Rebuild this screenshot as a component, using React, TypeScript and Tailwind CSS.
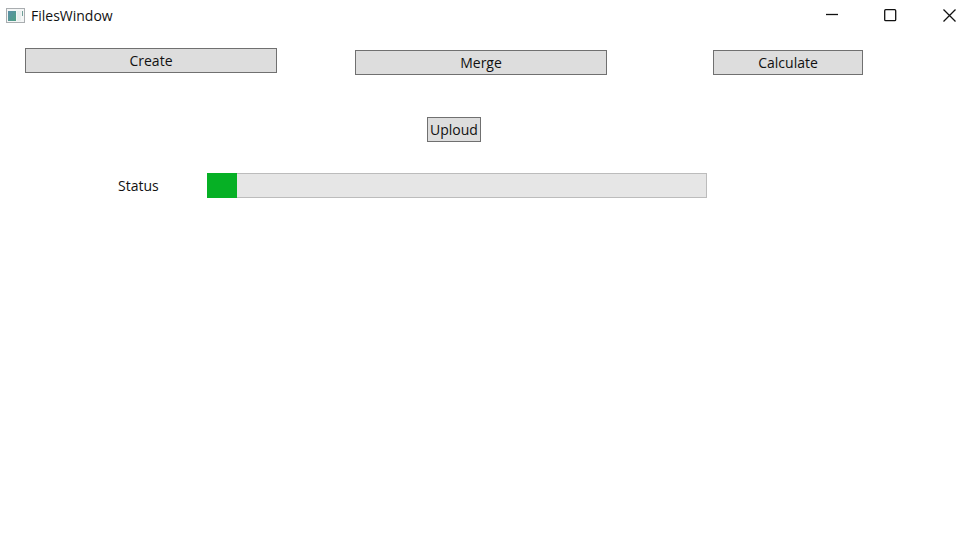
import type { ReactNode } from "react";

const PROGRESS = 6;

function PushButton({ className, children }: { className: string; children: ReactNode }) {
  return (
    <button
      type="button"
      className={`flex h-[25px] items-center justify-center border border-[#707070] bg-[#dddddd] leading-5 hover:bg-[#bee6fd] ${className}`}
    >
      {children}
    </button>
  );
}

function CaptionButton({ label, children }: { label: string; children: ReactNode }) {
  return (
    <button
      type="button"
      aria-label={label}
      className="flex h-[31px] w-[59px] items-center justify-center hover:bg-gray-200"
    >
      <svg width="13" height="13" viewBox="0 0 13 13" fill="none" stroke="#111" strokeWidth="1.3" aria-hidden="true">
        {children}
      </svg>
    </button>
  );
}

function AppIcon() {
  return (
    <svg width="19" height="15" viewBox="0 0 19 15" aria-hidden="true">
      <defs>
        <linearGradient id="pane" x1="0" y1="0" x2="1" y2="1">
          <stop offset="0" stopColor="#5b8fa8" />
          <stop offset="1" stopColor="#4f9f84" />
        </linearGradient>
      </defs>
      <rect x="0.5" y="0.5" width="18" height="14" fill="#f4f6f6" stroke="#a9adb0" />
      <rect x="2" y="3" width="8" height="10" fill="url(#pane)" />
      <rect x="11" y="3" width="4" height="10" fill="#e9eeee" />
      <rect x="16" y="3" width="1" height="5" fill="#6f9f98" />
    </svg>
  );
}

export default function App() {
  return (
    <div className="min-h-screen bg-white font-['Open_Sans','Noto_Sans',sans-serif] text-sm text-[#111]">
      <header className="flex h-[31px] items-center justify-between">
        <div className="flex items-center gap-[6px] pl-[6px]">
          <AppIcon />
          <h1 className="leading-[21px]">FilesWindow</h1>
        </div>
        <div className="-mr-[7px] flex overflow-hidden">
          <CaptionButton label="Minimize">
            <path d="M1 5.5h12" />
          </CaptionButton>
          <CaptionButton label="Maximize">
            <rect x="0.7" y="0.7" width="11" height="11" rx="1" />
          </CaptionButton>
          <CaptionButton label="Close">
            <path d="M0.5 0.5l12 12M12.5 0.5l-12 12" />
          </CaptionButton>
        </div>
      </header>

      <main className="pt-[17px]">
        <div className="grid grid-cols-[25fr_252fr_78fr_252fr_106fr_150fr_109fr] items-end">
          <PushButton className="col-start-2 mb-[2px]">Create</PushButton>
          <PushButton className="col-start-4">Merge</PushButton>
          <PushButton className="col-start-6">Calculate</PushButton>
        </div>

        <div className="mt-[42px] grid grid-cols-[427fr_54px_491fr]">
          <PushButton className="col-start-2">Uploud</PushButton>
        </div>

        <div className="mt-[31px] grid grid-cols-[118fr_89fr_500fr_265fr] items-center">
          <label htmlFor="status" className="col-start-2 leading-[21px]">
            Status
          </label>
          <progress
            id="status"
            value={PROGRESS}
            max={100}
            className="h-[25px] w-full appearance-none [&::-webkit-progress-bar]:bg-[#e6e6e6] [&::-webkit-progress-bar]:shadow-[inset_0_0_0_1px_#bcbcbc] [&::-webkit-progress-value]:bg-[#06b025]"
          />
        </div>
      </main>
    </div>
  );
}
